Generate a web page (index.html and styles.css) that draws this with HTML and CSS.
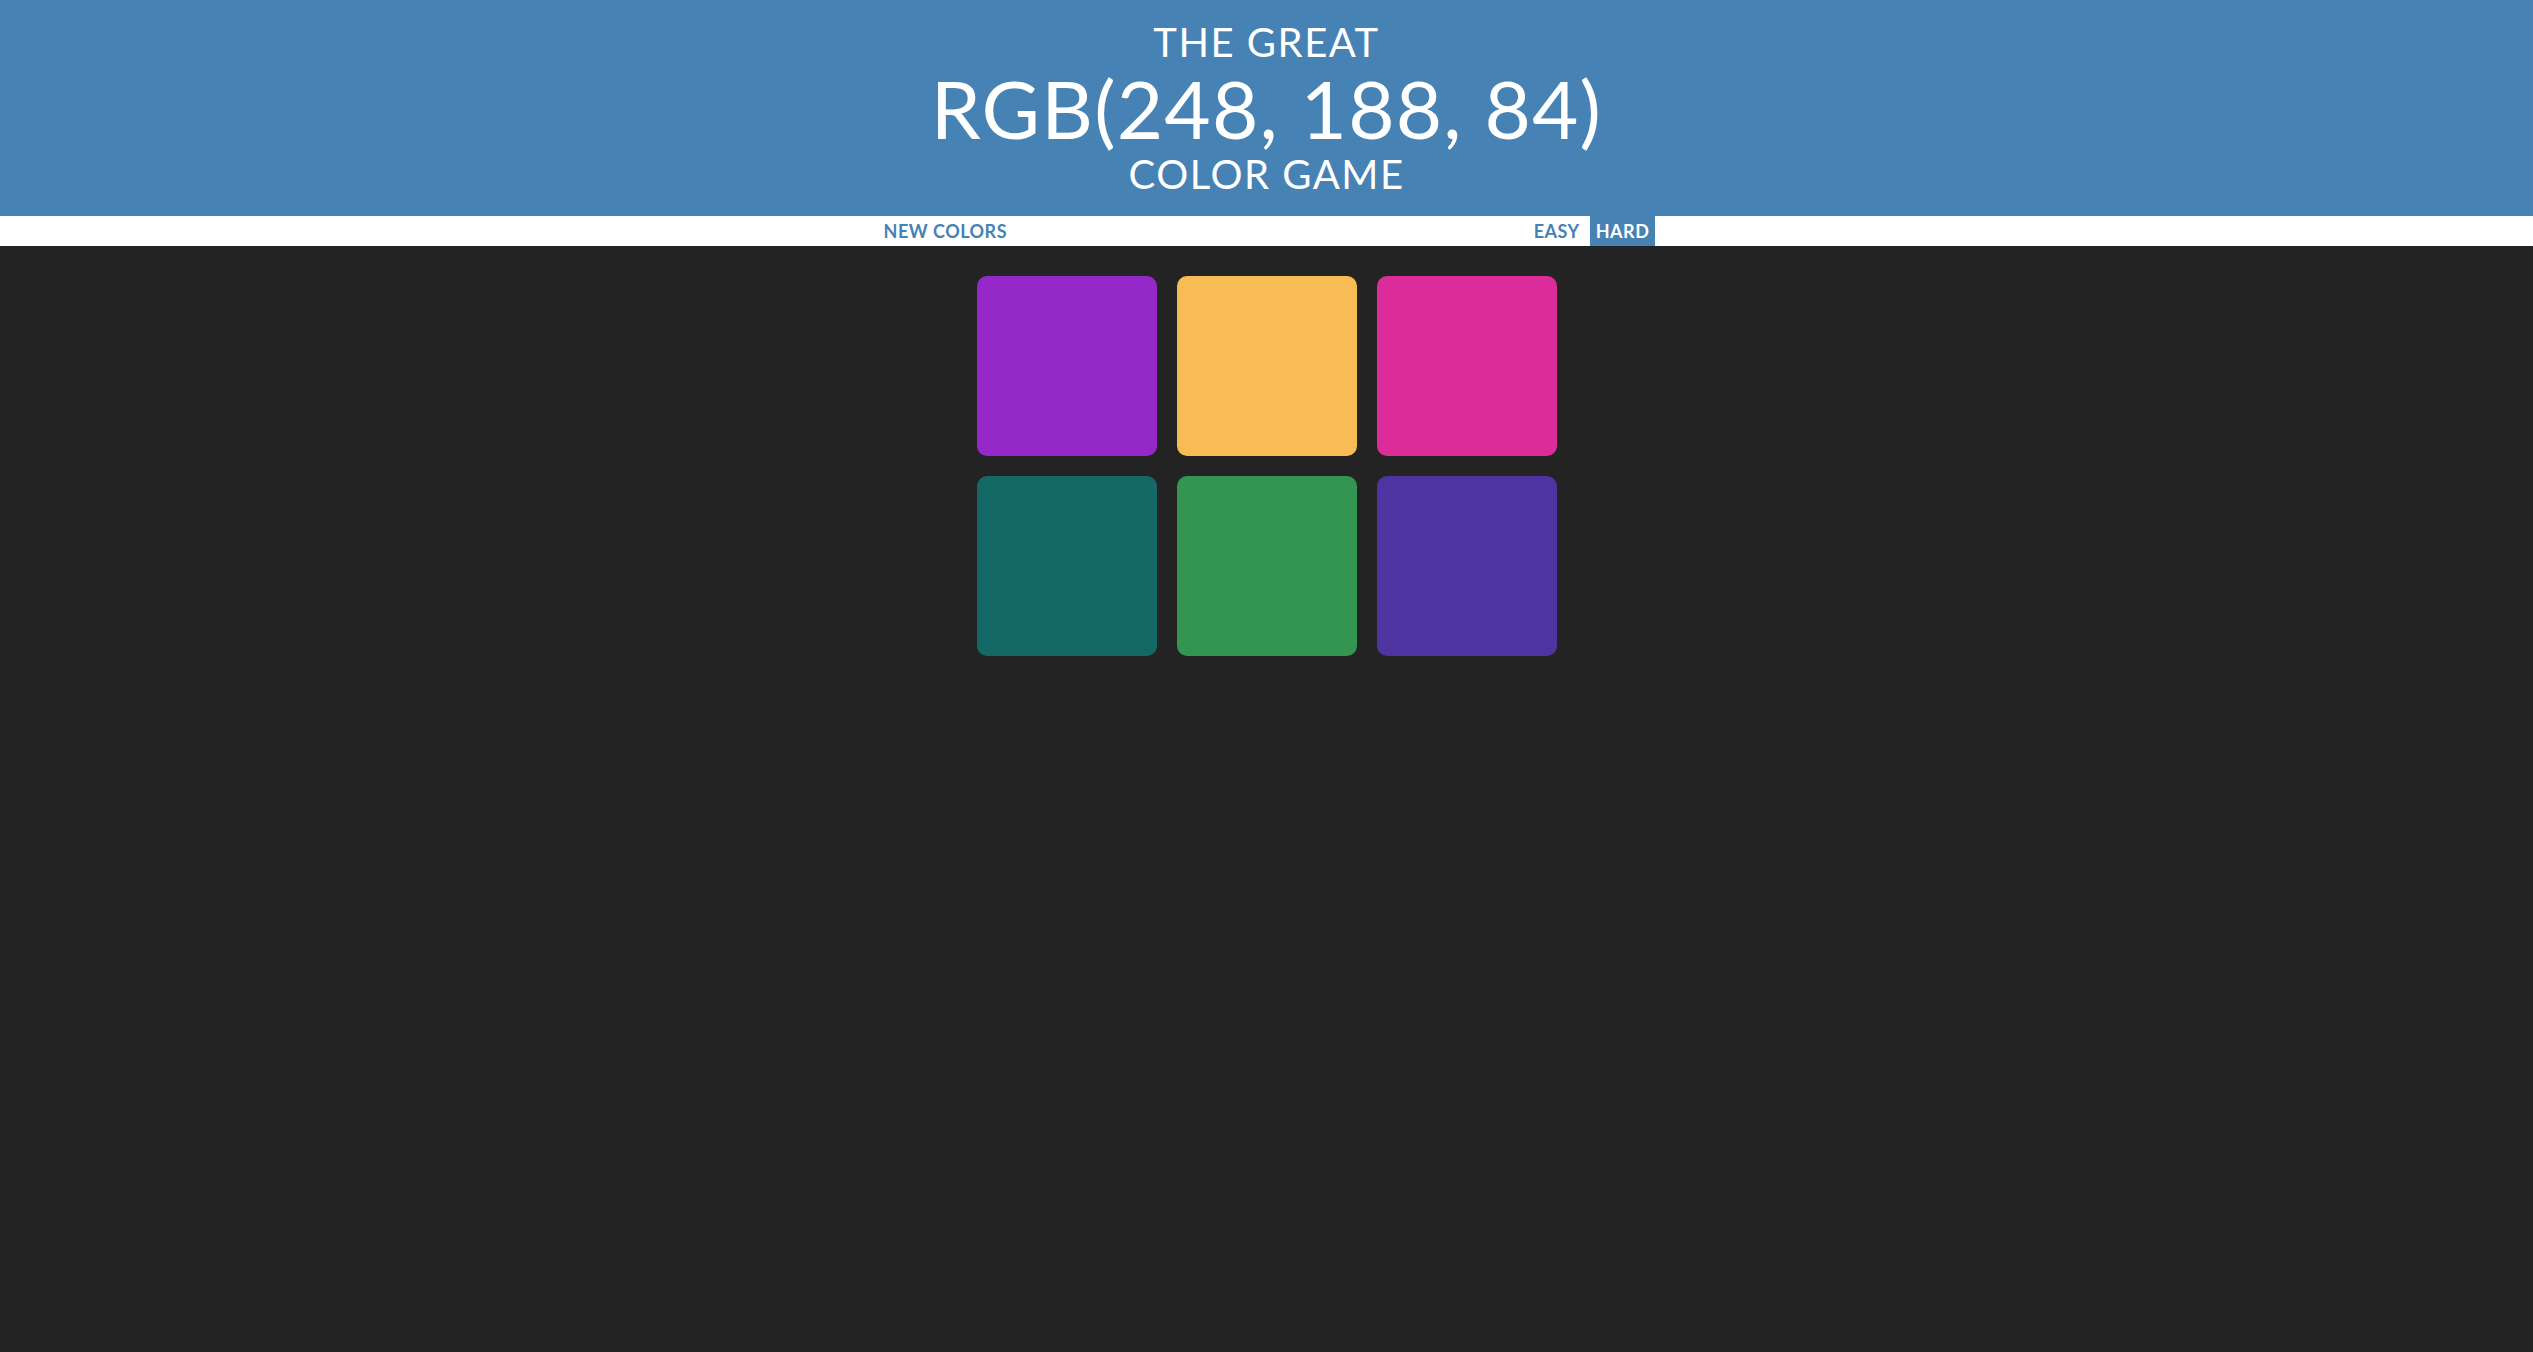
FILE: index.html
```html
<!DOCTYPE html>
<html lang="en">
<head>
<meta charset="utf-8">
<title>Color Game</title>
<link rel="stylesheet" href="styles.css">
</head>
<body>
<h1 class="title">
  <span class="title-line">The Great</span>
  <span class="title-rgb">RGB(248, 188, 84)</span>
  <span class="title-line">Color Game</span>
</h1>
<div class="stripe">
  <button class="stripe-btn stripe-btn-reset">New Colors</button>
  <span class="message"></span>
  <button class="stripe-btn stripe-btn-mode">Easy</button>
  <button class="stripe-btn stripe-btn-mode selected">Hard</button>
</div>
<div class="board">
  <div class="square sq-purple"></div>
  <div class="square sq-orange"></div>
  <div class="square sq-pink"></div>
  <div class="square sq-teal"></div>
  <div class="square sq-green"></div>
  <div class="square sq-indigo"></div>
</div>
</body>
</html>
```
FILE: styles.css
```css
html, body {
  margin: 0;
  padding: 0;
}
body {
  background: #232323;
  font-family: Lato, "Open Sans", sans-serif;
}
.title {
  margin: 0;
  padding: 20px 0;
  background: #4682b4;
  color: #fff;
  text-align: center;
  text-transform: uppercase;
  font-weight: 400;
  line-height: 1.1;
  display: flex;
  flex-direction: column;
  align-items: center;
}
.title-line {
  font-size: 40px;
  letter-spacing: 1.5px;
}
.title-rgb {
  font-size: 80px;
  letter-spacing: 1.2px;
}
.stripe {
  background: #fff;
  height: 30px;
  display: flex;
  justify-content: center;
  align-items: stretch;
  gap: 4px;
}
.stripe-btn {
  border: none;
  margin: 0;
  background: #fff;
  color: #4682b4;
  font-family: Lato, "Open Sans", sans-serif;
  font-weight: 700;
  font-size: 18px;
  letter-spacing: 0.5px;
  text-transform: uppercase;
  padding: 1px 6px;
  height: 100%;
  outline: none;
}
.stripe-btn.selected {
  background: #4682b4;
  color: #fff;
}
.message {
  width: 20%;
}
.board {
  width: 580px;
  margin: 20px auto;
  padding: 10px;
  display: grid;
  grid-template-columns: repeat(3, 180px);
  gap: 20px;
}
.square {
  width: 180px;
  height: 180px;
  border-radius: 10px;
}
.sq-purple { background: rgb(148, 40, 200); }
.sq-orange { background: rgb(248, 188, 84); }
.sq-pink { background: rgb(220, 44, 154); }
.sq-teal { background: rgb(20, 104, 102); }
.sq-green { background: rgb(52, 148, 82); }
.sq-indigo { background: rgb(78, 52, 160); }
```
